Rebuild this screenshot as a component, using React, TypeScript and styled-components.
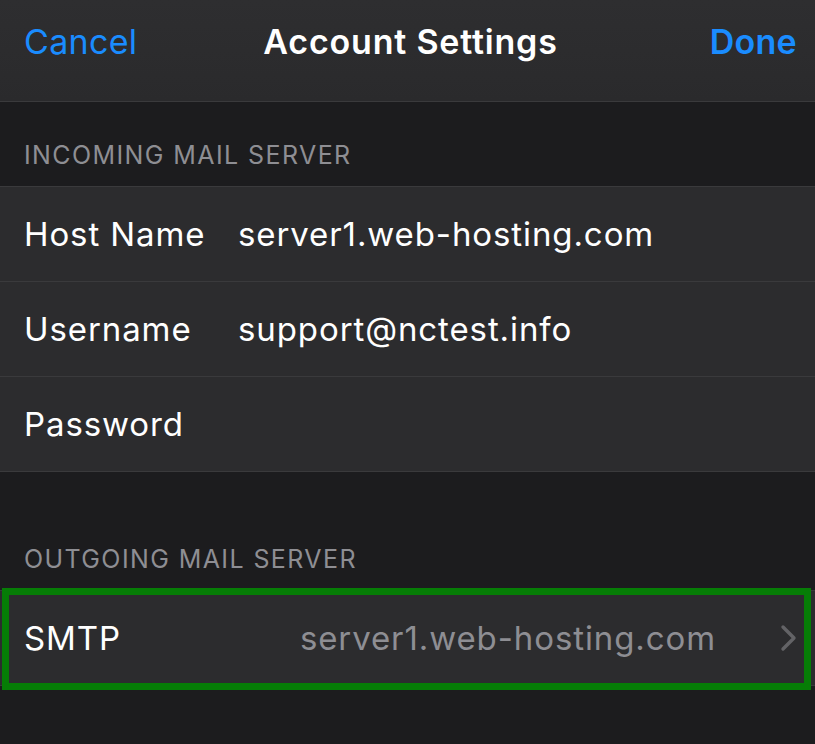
import { FC } from "react";
import styled, { createGlobalStyle } from "styled-components";

const GlobalStyle = createGlobalStyle`
  html, body {
    margin: 0;
    padding: 0;
    background: #1c1c1e;
  }
  body {
    font-family: Inter, "Liberation Sans", sans-serif;
    -webkit-font-smoothing: antialiased;
  }
`;

const Screen = styled.div`
  width: 815px;
  height: 744px;
  background: #1c1c1e;
  overflow: hidden;
`;

const NavBar = styled.div`
  height: 102px;
  box-sizing: border-box;
  padding: 0 18px 18px 24px;
  display: grid;
  grid-template-columns: 1fr auto 1fr;
  align-items: center;
  background: linear-gradient(180deg, #2e2e30 0%, #2a2a2c 100%);
  border-bottom: 1px solid #3a3a3c;
  font-size: 34px;
`;

const NavButton = styled.span<{ $bold?: boolean }>`
  color: #1a8cff;
  font-weight: ${(p) => (p.$bold ? 600 : 400)};
  letter-spacing: 0.3px;
  justify-self: ${(p) => (p.$bold ? "end" : "start")};
`;

const NavTitle = styled.span`
  color: #ffffff;
  font-weight: 600;
  letter-spacing: 0.8px;
`;

const SectionHeader = styled.div<{ $top: number }>`
  padding: ${(p) => p.$top}px 24px 16px;
  color: #8e8e93;
  font-size: 25px;
  letter-spacing: 1.4px;
  line-height: 30px;
`;

const Group = styled.div`
  background: #2c2c2e;
  border-top: 1px solid #3a3a3c;
  border-bottom: 1px solid #3a3a3c;
`;

const Row = styled.div`
  position: relative;
  height: 94px;
  display: flex;
  align-items: center;
  padding: 0 18px 0 24px;
  font-size: 33px;
  letter-spacing: 0.9px;
  color: #ffffff;

  & + & {
    border-top: 1px solid #3a3a3c;
  }
`;

const Label = styled.span`
  width: 214px;
  flex: 0 0 auto;
`;

const Value = styled.span<{ $muted?: boolean }>`
  flex: 1;
  color: ${(p) => (p.$muted ? "#8e8e93" : "#ffffff")};
  text-align: ${(p) => (p.$muted ? "right" : "left")};
`;

const Chevron = styled.svg`
  width: 17px;
  height: 28px;
  margin-left: 64px;
  flex: 0 0 auto;
`;

const Highlight = styled.div`
  position: absolute;
  left: 2px;
  right: 4px;
  top: -3px;
  bottom: -5px;
  border: 7px solid #067d06;
  pointer-events: none;
`;

type FieldProps = { label: string; value?: string };

const Field: FC<FieldProps> = ({ label, value }) => (
  <Row>
    <Label>{label}</Label>
    <Value>{value}</Value>
  </Row>
);

const App: FC = () => (
  <Screen>
    <GlobalStyle />
    <NavBar>
      <NavButton>Cancel</NavButton>
      <NavTitle>Account Settings</NavTitle>
      <NavButton $bold>Done</NavButton>
    </NavBar>

    <SectionHeader $top={38}>INCOMING MAIL SERVER</SectionHeader>
    <Group>
      <Field label="Host Name" value="server1.web-hosting.com" />
      <Field label="Username" value="support@nctest.info" />
      <Field label="Password" />
    </Group>

    <SectionHeader $top={72}>OUTGOING MAIL SERVER</SectionHeader>
    <Group>
      <Row>
        <Label>SMTP</Label>
        <Value $muted>server1.web-hosting.com</Value>
        <Chevron viewBox="0 0 17 28">
          <path
            d="M3 3l11 11L3 25"
            fill="none"
            stroke="#636366"
            strokeWidth="3.4"
            strokeLinecap="round"
            strokeLinejoin="round"
          />
        </Chevron>
        <Highlight />
      </Row>
    </Group>
  </Screen>
);

export default App;
